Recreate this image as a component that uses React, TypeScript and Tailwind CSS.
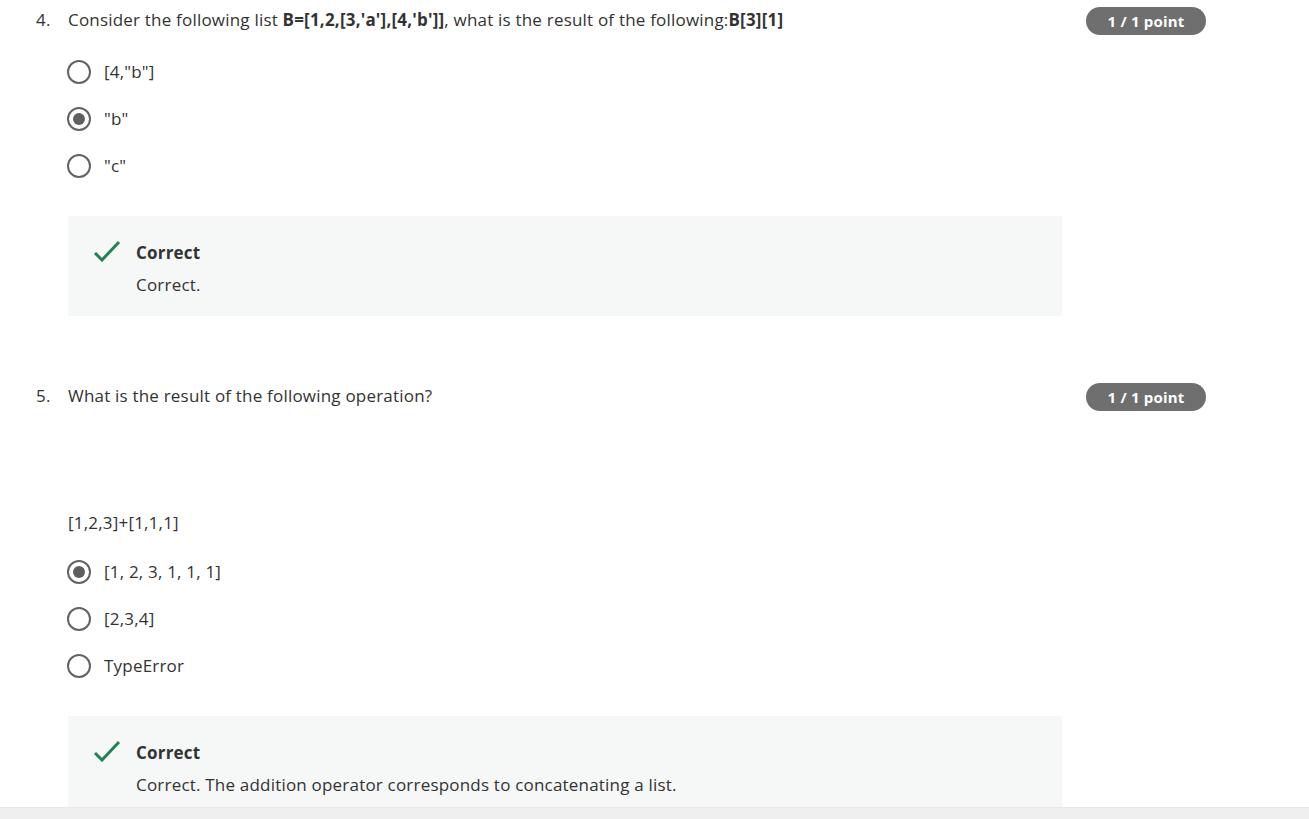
import type { ReactNode } from 'react';

const FONT = { fontFamily: '"Open Sans", "Noto Sans", Arial, sans-serif' };

function Badge() {
  return (
    <div className="shrink-0 flex items-center justify-center w-[120px] h-[28px] rounded-full bg-[#6f6f6f] text-white text-[15px] tracking-[0.2px] font-bold">
      1 / 1 point
    </div>
  );
}

function Radio({ checked, label }: { checked?: boolean; label: string }) {
  return (
    <div className="flex items-center h-6 gap-[13px]">
      <span className="w-6 h-6 rounded-full border-[2.5px] border-[#636363] flex items-center justify-center">
        {checked && <span className="w-[12px] h-[12px] rounded-full bg-[#5f5f5f]" />}
      </span>
      <span className="text-[17px] tracking-[0.2px] leading-6 text-[#333]">{label}</span>
    </div>
  );
}

function Options({ items, selected }: { items: string[]; selected: number }) {
  return (
    <div className="ml-[31px] flex flex-col gap-[23px]">
      {items.map((it, i) => (
        <Radio key={it} label={it} checked={i === selected} />
      ))}
    </div>
  );
}

function Feedback({ text }: { text: string }) {
  return (
    <div className="ml-[32px] w-[994px] bg-[#f5f8f7] pl-[25px] pt-[24px] pb-[19px] flex items-start gap-[15px]">
      <svg width="28" height="22" viewBox="0 0 28 22" className="shrink-0">
        <polyline points="2,13 9,20 26,2" fill="none" stroke="#1f8354" strokeWidth="3" />
      </svg>
      <div className="flex flex-col gap-2 pt-px text-[17px] tracking-[0.2px] leading-6 text-[#333]">
        <div className="font-bold">Correct</div>
        <div>{text}</div>
      </div>
    </div>
  );
}

function QuestionRow({ num, children }: { num: string; children: ReactNode }) {
  return (
    <div className="flex items-center justify-between h-[28px]">
      <div className="flex text-[17px] tracking-[0.2px] leading-6 text-[#333] -mt-[2px]">
        <span className="w-8">{num}</span>
        <span>{children}</span>
      </div>
      <Badge />
    </div>
  );
}

export default function App() {
  return (
    <div className="w-[1309px] h-[819px] bg-white flex flex-col overflow-hidden" style={FONT}>
      <div className="flex-1 overflow-hidden">
        <div className="ml-[36px] w-[1170px] pt-[7px]">
          <QuestionRow num="4.">
            Consider the following list <b>B=[1,2,[3,'a'],[4,'b']]</b>, what is the result of the following:<b>B[3][1]</b>
          </QuestionRow>
          <div className="mt-[25px]">
            <Options items={['[4,"b"]', '"b"', '"c"']} selected={1} />
          </div>
          <div className="mt-[38px]">
            <Feedback text="Correct." />
          </div>

          <div className="mt-[67px]">
            <QuestionRow num="5.">What is the result of the following operation?</QuestionRow>
          </div>
          <div className="mt-[100px] ml-[32px] text-[17px] tracking-[0.2px] leading-6 text-[#333]">[1,2,3]+[1,1,1]</div>
          <div className="mt-[25px]">
            <Options items={['[1, 2, 3, 1, 1, 1]', '[2,3,4]', 'TypeError']} selected={0} />
          </div>
          <div className="mt-[38px]">
            <Feedback text="Correct. The addition operator corresponds to concatenating a list." />
          </div>
        </div>
      </div>
      <div className="h-[12px] shrink-0 bg-[#efefef] border-t border-[#e8e8e8]" />
    </div>
  );
}
